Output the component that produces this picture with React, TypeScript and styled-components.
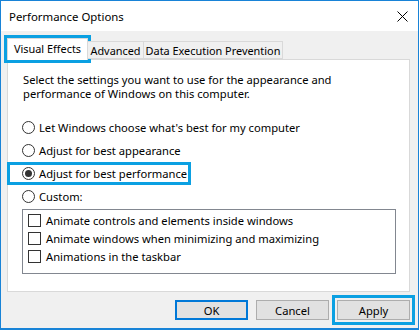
import React from 'react';
import styled, { createGlobalStyle } from 'styled-components';

const callout = '#0ba0e2';

const GlobalStyle = createGlobalStyle`
  html, body { margin: 0; padding: 0; background: #fff; }
  body {
    font-family: "Noto Sans", sans-serif;
    font-size: 11.2px;
    color: #000;
  }
  * { box-sizing: border-box; }
`;

const Window = styled.div`
  width: 419px;
  height: 330px;
  border: 1px solid #1883d7;
  border-bottom-width: 2px;
  display: flex;
  flex-direction: column;
  background: #f0f0f0;
`;

const TitleBar = styled.div`
  height: 30px;
  flex: none;
  background: #fff;
  display: flex;
  align-items: center;
  justify-content: space-between;
  padding: 0 10px 0 8px;
  font-size: 11.4px;
`;

const Body = styled.div`
  flex: 1;
  display: flex;
  flex-direction: column;
  padding: 0 8px 0 6px;
`;

const TabStrip = styled.div`
  height: 28px;
  display: flex;
  align-items: flex-end;
`;

const Tab = styled.div<{ $w: number; $active?: boolean }>`
  flex: none;
  width: ${(p) => p.$w}px;
  height: ${(p) => (p.$active ? 22 : 18)}px;
  margin-bottom: ${(p) => (p.$active ? -1 : 0)}px;
  display: flex;
  align-items: center;
  justify-content: center;
  font-size: 10.9px;
  white-space: nowrap;
  border: 1px solid #d9d9d9;
  border-bottom: ${(p) => (p.$active ? 'none' : '1px solid #d9d9d9')};
  border-left: ${(p) => (p.$active ? '1px solid #d9d9d9' : 'none')};
  background: ${(p) => (p.$active ? '#fff' : '#f0f0f0')};
  position: ${(p) => (p.$active ? 'relative' : 'static')};
  z-index: 1;
  outline: ${(p) => (p.$active ? `3px solid ${callout}` : 'none')};
  padding-bottom: ${(p) => (p.$active ? 2 : 0)}px;
`;

const Panel = styled.div`
  height: 233px;
  background: #fff;
  border: 1px solid #d9d9d9;
  padding: 13px 14px 0 15px;
  display: flex;
  flex-direction: column;
`;

const Description = styled.p`
  margin: 0 0 15px;
  line-height: 14px;
  white-space: nowrap;
`;

const RadioRow = styled.div`
  height: 23px;
  display: flex;
  align-items: center;
`;

const Choice = styled.label<{ $highlight?: boolean }>`
  display: inline-flex;
  align-items: center;
  gap: 4px;
  white-space: nowrap;
  margin-left: ${(p) => (p.$highlight ? -13 : -1)}px;
  padding: ${(p) => (p.$highlight ? '0 1px 0 12px' : '0')};
  height: 17px;
  outline: ${(p) => (p.$highlight ? `3px solid ${callout}` : 'none')};
`;

const Radio = styled.span<{ $checked?: boolean }>`
  flex: none;
  width: 13px;
  height: 13px;
  border-radius: 50%;
  border: 1px solid #333;
  background: #fff;
  display: inline-flex;
  align-items: center;
  justify-content: center;
  &::after {
    content: '';
    width: 7px;
    height: 7px;
    border-radius: 50%;
    background: ${(p) => (p.$checked ? '#333' : 'transparent')};
  }
`;

const ListBox = styled.div`
  width: 374px;
  height: 65px;
  margin: 1px 0 0 -1px;
  border: 1px solid #828790;
  padding: 1px 0 0 5px;
`;

const CheckRow = styled.div`
  height: 18px;
  display: flex;
  align-items: center;
  gap: 5px;
  white-space: nowrap;
`;

const CheckBox = styled.span`
  flex: none;
  width: 13px;
  height: 13px;
  border: 1px solid #333;
  background: #fff;
`;

const ButtonRow = styled.div`
  display: flex;
  justify-content: flex-end;
  gap: 8px;
  margin-top: 8px;
`;

const Button = styled.button<{ $default?: boolean; $highlight?: boolean }>`
  width: 73px;
  height: 20px;
  padding: 0;
  font: inherit;
  color: #000;
  background: #e1e1e1;
  border: ${(p) => (p.$default ? '2px solid #0078d7' : '1px solid #adadad')};
  outline: ${(p) => (p.$highlight ? `3px solid ${callout}` : 'none')};
  outline-offset: 2px;
`;

const CloseIcon = () => (
  <svg width="11" height="11" viewBox="0 0 11 11">
    <path d="M0.5 0.5L10.5 10.5M10.5 0.5L0.5 10.5" stroke="#000" strokeWidth="1" />
  </svg>
);

const radios = [
  { label: "Let Windows choose what's best for my computer" },
  { label: 'Adjust for best appearance' },
  { label: 'Adjust for best performance', checked: true },
  { label: 'Custom:' },
];

const effects = [
  'Animate controls and elements inside windows',
  'Animate windows when minimizing and maximizing',
  'Animations in the taskbar',
];

export default function App() {
  return (
    <>
      <GlobalStyle />
      <Window>
        <TitleBar>
          <span>Performance Options</span>
          <CloseIcon />
        </TitleBar>
        <Body>
          <TabStrip>
            <Tab $w={81} $active>Visual Effects</Tab>
            <Tab $w={56}>Advanced</Tab>
            <Tab $w={139}>Data Execution Prevention</Tab>
          </TabStrip>
          <Panel>
            <Description>
              Select the settings you want to use for the appearance and
              <br />
              performance of Windows on this computer.
            </Description>
            {radios.map((r) => (
              <RadioRow key={r.label}>
                <Choice $highlight={r.checked}>
                  <Radio $checked={r.checked} />
                  {r.label}
                </Choice>
              </RadioRow>
            ))}
            <ListBox>
              {effects.map((e) => (
                <CheckRow key={e}>
                  <CheckBox />
                  {e}
                </CheckRow>
              ))}
            </ListBox>
          </Panel>
          <ButtonRow>
            <Button $default>OK</Button>
            <Button>Cancel</Button>
            <Button $highlight>Apply</Button>
          </ButtonRow>
        </Body>
      </Window>
    </>
  );
}
